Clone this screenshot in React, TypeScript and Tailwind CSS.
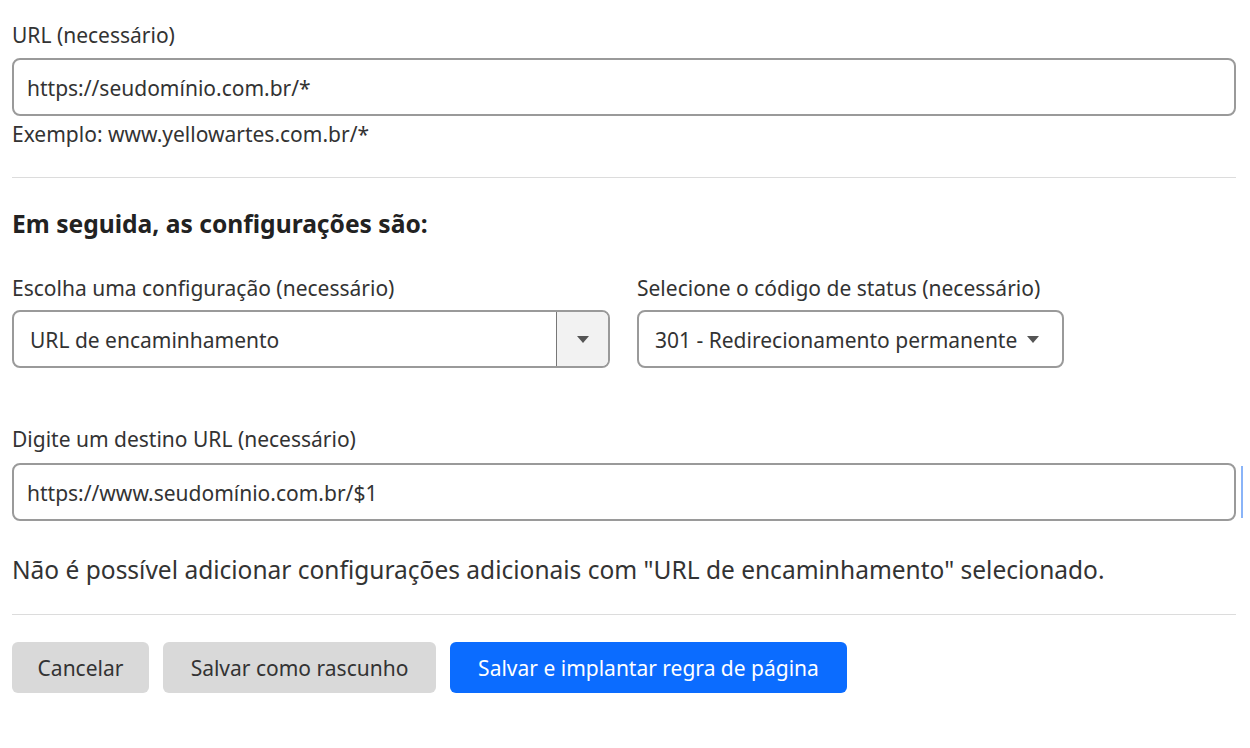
function Caret() {
  return (
    <svg width="12" height="7" viewBox="0 0 12 7" aria-hidden className="shrink-0">
      <path d="M0 0h12L6 7z" fill="#555" />
    </svg>
  );
}

export default function App() {
  return (
    <div
      className="min-h-[748px] w-[1250px] bg-white px-3 pt-[23px] text-[#333]"
      style={{ fontFamily: '"Noto Sans", "Open Sans", sans-serif' }}
    >
      <label className="block text-[21px] leading-6">URL (necessário)</label>
      <div className="mt-[11px] flex h-[58px] w-[1224px] items-center rounded-lg border-2 border-[#9a9a9a] px-[13px] pt-[3px] text-[21px]">
        https://seudomínio.com.br/*
      </div>
      <p className="mt-[6px] text-[21px] leading-6">Exemplo: www.yellowartes.com.br/*</p>

      <hr className="mt-[31px] w-[1224px] border-t border-[#dcdcdc]" />

      <h2 className="mt-[31px] text-[24.6px] font-bold leading-[30px] text-[#222]">
        Em seguida, as configurações são:
      </h2>

      <div className="mt-[37px] flex gap-[27px]">
        <div className="flex flex-col">
          <label className="text-[21px] leading-6">Escolha uma configuração (necessário)</label>
          <div className="mt-[10px] flex h-[58px] w-[598px] overflow-hidden rounded-lg border-2 border-[#9a9a9a]">
            <div className="flex flex-1 items-center px-[16px] pt-[3px] text-[21px]">URL de encaminhamento</div>
            <div className="flex w-[52px] items-center justify-center border-l border-[#777] bg-[#f2f2f2]">
              <Caret />
            </div>
          </div>
        </div>
        <div className="flex flex-col">
          <label className="text-[21px] leading-6">Selecione o código de status (necessário)</label>
          <div className="mt-[10px] flex h-[58px] w-[427px] items-center gap-[10px] rounded-lg border-2 border-[#9a9a9a] pl-[16px] text-[21px]">
            <span className="whitespace-nowrap pt-[3px]">301 - Redirecionamento permanente</span>
            <Caret />
          </div>
        </div>
      </div>

      <div className="mt-[59px] flex items-start">
        <div className="flex shrink-0 flex-col">
          <label className="text-[21px] leading-6">Digite um destino URL (necessário)</label>
          <div className="mt-[12px] flex h-[58px] w-[1224px] items-center rounded-lg border-2 border-[#9a9a9a] px-[13px] pt-[3px] text-[21px]">
            https://www.seudomínio.com.br/$1
          </div>
        </div>
        <div className="ml-[5px] mt-[39px] h-[52px] w-[2px] shrink-0 bg-[#8ab4f8]" />
      </div>

      <p className="mt-[33px] whitespace-nowrap text-[24.5px] leading-8">
        Não é possível adicionar configurações adicionais com "URL de encaminhamento" selecionado.
      </p>

      <hr className="mt-[28px] w-[1224px] border-t border-[#dcdcdc]" />

      <div className="mt-[27px] flex gap-[14px] text-[21px]">
        <button className="h-[51px] w-[137px] rounded-md bg-[#d9d9d9] pt-[2px] text-[#333]">Cancelar</button>
        <button className="h-[51px] w-[273px] rounded-md bg-[#d9d9d9] pt-[2px] text-[#333]">Salvar como rascunho</button>
        <button className="h-[51px] w-[397px] rounded-md bg-[#0b6cff] pt-[2px] text-white">
          Salvar e implantar regra de página
        </button>
      </div>
    </div>
  );
}
